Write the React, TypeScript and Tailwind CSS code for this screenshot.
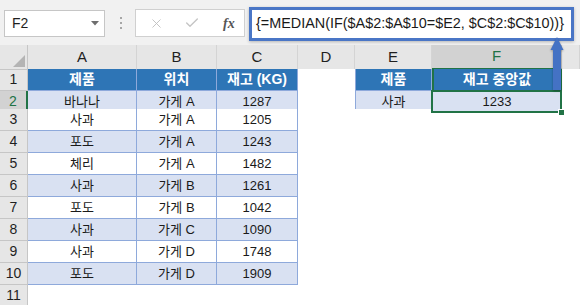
import { X, Check } from 'lucide-react';

const cols = ['A', 'B', 'C', 'D', 'E', 'F', ''];

const rows: string[][] = [
    ['제품', '위치', '재고 (KG)'],
    ['바나나', '가게 A', '1287'],
    ['사과', '가게 A', '1205'],
    ['포도', '가게 A', '1243'],
    ['체리', '가게 A', '1482'],
    ['사과', '가게 B', '1261'],
    ['포도', '가게 B', '1042'],
    ['사과', '가게 C', '1090'],
    ['사과', '가게 D', '1748'],
    ['포도', '가게 D', '1909'],
];

const rowHeights = ['h-[22px]', 'h-[18px]', 'h-[22px]', 'h-[22px]', 'h-[22px]', 'h-[22px]', 'h-[22px]', 'h-[22px]', 'h-[22px]', 'h-[22px]'];

const gridCols = 'grid grid-cols-[28px_109px_80px_81px_57px_77px_130px_1fr]';

function Cell({ r, c }: { r: number; c: number }) {
    // r: 0-based data row (0 = header row 1), c: column index
    const header = r === 0;
    const shaded = r % 2 === 1;

    if (c <= 2) {
        return (
            <div
                className={`flex items-center justify-center border-r border-b border-[#8ea9db] ${header
                    ? 'bg-[#2e75b6] text-white font-bold text-[14px]'
                    : shaded ? 'bg-[#d9e1f2] text-[#1a1a1a] text-[13px]' : 'bg-white text-[#1a1a1a] text-[13px]'
                    }`}
            >
                {rows[r][c]}
            </div>
        );
    }

    if (c === 4 && r <= 1) {
        return (
            <div
                className={`flex items-center justify-center border-l border-r border-b border-[#8ea9db] ${header
                    ? 'bg-[#2e75b6] text-white font-bold text-[14px]'
                    : 'bg-[#d9e1f2] text-[#1a1a1a] text-[13px]'
                    }`}
            >
                {header ? '제품' : '사과'}
            </div>
        );
    }

    if (c === 5 && r === 0) {
        return (
            <div className="flex items-center justify-center border-x-2 border-[#217346] border-b border-b-[#8ea9db] bg-[#2e75b6] text-white font-bold text-[14px]">
                재고 중앙값
            </div>
        );
    }

    if (c === 5 && r === 1) {
        return (
            <div className="relative flex items-center justify-center bg-[#d9e1f2] text-[#1a1a1a] text-[13px]">
                1233
                {/* selection frame */}
                <div className="absolute -left-[1px] -top-[1px] right-0 bottom-0 border-2 border-[#217346]" />
                <div className="absolute -right-[3px] -bottom-[3px] z-10 h-[7px] w-[7px] border border-white bg-[#217346]" />
            </div>
        );
    }

    return <div className="bg-white" />;
}

export default function App() {
    return (
        <div className="relative h-[305px] w-[580px] overflow-hidden bg-white font-['Liberation_Sans','Noto_Sans_CJK_KR',sans-serif] text-[#1f1f1f]">
            {/* Formula bar */}
            <div className="flex h-[45px] items-start bg-[#f1f1f1]">
                <div className="ml-[4px] mt-[10px] flex h-[27px] w-[101px] items-center justify-between border border-[#c6c6c6] bg-white pl-[7px] pr-[5px] text-[14px]">
                    <span>F2</span>
                    <svg width="8" height="5" viewBox="0 0 8 5">
                        <polygon points="0,0 8,0 4,4.5" fill="#6e6e6e" />
                    </svg>
                </div>

                <div className="ml-[15px] mt-[17px] flex flex-col gap-[3px]">
                    <span className="h-[2px] w-[2px] bg-[#a6a6a6]" />
                    <span className="h-[2px] w-[2px] bg-[#a6a6a6]" />
                    <span className="h-[2px] w-[2px] bg-[#a6a6a6]" />
                </div>

                <div className="ml-[13px] mt-[9px] flex h-[28px] w-[110px] items-center border border-[#d0d0d0] bg-white pl-[13px]">
                    <X size={15} strokeWidth={1.4} className="text-[#bdbdbd]" />
                    <Check size={16} strokeWidth={2} className="ml-[20px] text-[#c4c4c4]" />
                    <span className="ml-[23px] font-['Liberation_Serif',serif] text-[14px] font-bold italic text-[#555]">fx</span>
                </div>

                <div className="ml-[4px] mt-[7px] flex h-[34px] w-[325px] items-center border-[3px] border-[#4a76c6] bg-white pl-[4px] text-[14.4px] text-[#1a1a1a] shadow-[0_1px_3px_rgba(0,0,0,0.25)]">
                    {'{=MEDIAN(IF($A$2:$A$10=$E2, $C$2:$C$10))}'}
                </div>
            </div>

            {/* Column headers */}
            <div className={`${gridCols} h-[24px] bg-[#e6e6e6] text-[15px]`}>
                <div className="relative border-r border-b border-[#c6c6c6]">
                    <svg className="absolute right-[2px] bottom-[2px]" width="12" height="12" viewBox="0 0 12 12">
                        <polygon points="12,0 12,12 0,12" fill="#b4b4b4" />
                    </svg>
                </div>
                {cols.map((c, i) => (
                    <div
                        key={i}
                        className={`flex items-center justify-center ${c === 'F'
                            ? 'bg-[#d2d2d2] text-[#217346] border-b-2 border-b-[#217346] border-r border-r-[#c6c6c6]'
                            : 'border-r border-r-[#d4d4d4] border-b border-b-[#c6c6c6]'
                            }`}
                    >
                        {c}
                    </div>
                ))}
            </div>

            {/* Rows */}
            {rows.map((_, r) => (
                <div key={r} className={`${gridCols} ${rowHeights[r]}`}>
                    <div
                        className={`flex items-center justify-center border-b border-[#c6c6c6] text-[14px] ${r === 1
                            ? 'bg-[#d2d2d2] text-[#217346] border-r-2 border-r-[#217346]'
                            : 'bg-[#e6e6e6] border-r'
                            }`}
                    >
                        {r + 1}
                    </div>
                    {cols.map((_, c) => (
                        <Cell key={c} r={r} c={c} />
                    ))}
                </div>
            ))}

            <div className={`${gridCols} h-[20px]`}>
                <div className="flex items-center justify-center border-r border-[#c6c6c6] bg-[#e6e6e6] text-[14px]">11</div>
            </div>

            {/* Callout arrow */}
            <svg className="absolute left-[550px] top-[37px] drop-shadow-[0_1px_1px_rgba(0,0,0,0.3)]" width="14" height="53" viewBox="0 0 14 53">
                <polygon points="7,0 13.5,13 0.5,13" fill="#4472c4" />
                <rect x="3" y="12" width="8" height="41" fill="#4472c4" />
            </svg>
        </div>
    );
}
